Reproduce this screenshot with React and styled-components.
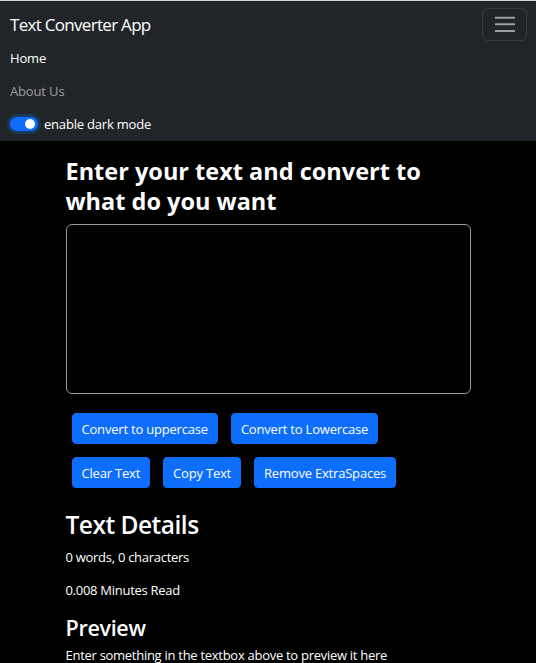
import React from 'react';
import styled, { createGlobalStyle } from 'styled-components';

const GlobalStyle = createGlobalStyle`
  html, body {
    margin: 0;
    padding: 0;
    background-color: #000;
  }
  body {
    border-top: 1px solid #cfd0d1;
    font-family: "Open Sans", "Noto Sans", sans-serif;
    color: #fff;
  }
  * {
    box-sizing: border-box;
  }
`;

const StyledNavbar = styled.nav`
  background-color: #212529;
  padding-bottom: 1px;
`;

const BrandRow = styled.div`
  display: flex;
  justify-content: space-between;
  align-items: center;
  height: 40px;
  padding: 6px 9px 0 10px;
`;

const Brand = styled.a`
  font-size: 17px;
  letter-spacing: -0.7px;
  color: #fff;
  text-decoration: none;
`;

const Toggler = styled.button`
  display: flex;
  align-items: center;
  justify-content: center;
  width: 45px;
  height: 33px;
  padding: 0;
  background: transparent;
  border: 1px solid rgba(255, 255, 255, 0.1);
  border-radius: 6px;
`;

const NavItem = styled.div`
  display: flex;
  align-items: center;
  height: 33px;
  padding-left: 10px;
  font-size: 13px;
  letter-spacing: -0.15px;
  color: ${(p) => (p.active ? '#fff' : 'rgba(255, 255, 255, 0.55)')};
`;

const SwitchTrack = styled.span`
  position: relative;
  display: inline-block;
  width: 28px;
  height: 14px;
  margin-right: 6px;
  border-radius: 7px;
  background-color: #0d6efd;
  box-shadow: 0 0 0 3px rgba(13, 110, 253, 0.25);
`;

const SwitchKnob = styled.span`
  position: absolute;
  top: 2px;
  right: 3px;
  width: 10px;
  height: 10px;
  border-radius: 50%;
  background-color: #fff;
`;

const SwitchLabel = styled.span`
  color: #fff;
  letter-spacing: -0.2px;
`;

const Container = styled.main`
  width: 405px;
  margin: 0 auto;
`;

const MainHeading = styled.h1`
  margin: 15px 0 8px;
  font-size: 23.5px;
  line-height: 30px;
  font-weight: 700;
`;

const TextBox = styled.textarea`
  display: block;
  width: 100%;
  height: 170px;
  background-color: #000;
  color: #fff;
  border: 1px solid #9a9a9a;
  border-radius: 6px;
  resize: none;
  outline: none;
`;

const ButtonGroup = styled.div`
  display: flex;
  flex-direction: column;
  gap: 13px;
  margin-top: 19px;
  padding-left: 6px;
`;

const ButtonRow = styled.div`
  display: flex;
  gap: 13px;
`;

const Button = styled.button`
  height: 31px;
  padding: 0 9px;
  font-family: inherit;
  font-size: 13px;
  letter-spacing: -0.2px;
  color: #fff;
  background-color: #0d6efd;
  border: 1px solid #0d6efd;
  border-radius: 4px;
  cursor: pointer;
`;

const SectionHeading = styled.h2`
  margin: ${(p) => p.margin};
  font-size: ${(p) => p.size};
  letter-spacing: ${(p) => p.spacing};
  line-height: 1.2;
  font-weight: 600;
`;

const Paragraph = styled.p`
  margin: ${(p) => p.margin};
  font-size: 13px;
  letter-spacing: -0.28px;
  line-height: 21px;
`;

const MenuIcon = () => (
  <svg width="24" height="24" viewBox="0 0 24 24">
    <path
      d="M2 5.7h20M2 12.3h20M2 19h20"
      stroke="rgba(255,255,255,0.55)"
      strokeWidth="2"
    />
  </svg>
);

const App = () => {
  return (
    <>
      <GlobalStyle />
      <StyledNavbar>
        <BrandRow>
          <Brand href="/">Text Converter App</Brand>
          <Toggler aria-label="Toggle navigation">
            <MenuIcon />
          </Toggler>
        </BrandRow>
        <NavItem active>Home</NavItem>
        <NavItem>About Us</NavItem>
        <NavItem>
          <SwitchTrack>
            <SwitchKnob />
          </SwitchTrack>
          <SwitchLabel>enable dark mode</SwitchLabel>
        </NavItem>
      </StyledNavbar>
      <Container>
        <MainHeading>Enter your text and convert to what do you want</MainHeading>
        <TextBox />
        <ButtonGroup>
          <ButtonRow>
            <Button>Convert to uppercase</Button>
            <Button>Convert to Lowercase</Button>
          </ButtonRow>
          <ButtonRow>
            <Button>Clear Text</Button>
            <Button>Copy Text</Button>
            <Button>Remove ExtraSpaces</Button>
          </ButtonRow>
        </ButtonGroup>
        <SectionHeading size="24.5px" spacing="-0.5px" margin="22px 0 8px">
          Text Details
        </SectionHeading>
        <Paragraph margin="0 0 12px">0 words, 0 characters</Paragraph>
        <Paragraph margin="0">0.008 Minutes Read</Paragraph>
        <SectionHeading size="21.5px" spacing="-0.3px" margin="14px 0 4px">
          Preview
        </SectionHeading>
        <Paragraph margin="0">Enter something in the textbox above to preview it here</Paragraph>
      </Container>
    </>
  );
};

export default App;
